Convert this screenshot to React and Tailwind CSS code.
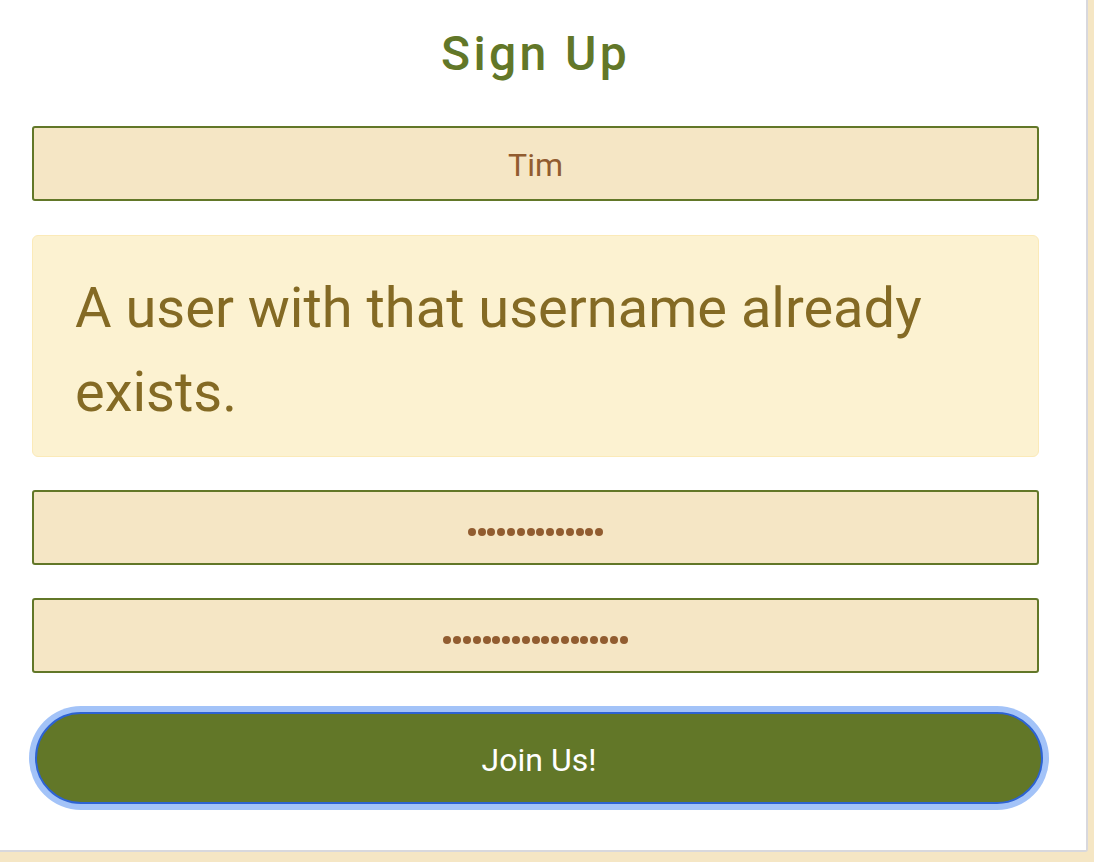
import React from 'react';

const fieldClass =
  "w-full h-[75px] border-2 border-[#627728] rounded-[3px] bg-[#f5e6c5] text-center text-[32px] text-[#915c30] outline-none";

// masked password, drawn as dots so their size matches the page
function PasswordField({ length, className = "" }) {
  return (
    <div className={`${fieldClass} ${className} flex items-center justify-center pt-[9px]`} role="textbox" aria-label="password">
      <div className="flex gap-[1.8px]">
        {Array.from({ length }).map((_, i) => (
          <span key={i} className="w-2 h-2 rounded-full bg-[#915c30]" />
        ))}
      </div>
    </div>
  );
}

export default function App() {
  return (
    <div className="min-h-screen bg-[#f5e6c4] font-['Roboto',sans-serif]">
      <div className="w-[1088px] h-[852px] bg-white border-r-2 border-b-2 border-[#d8d8dd] rounded-br-[3px] flex flex-col pl-8 pr-[47px]">
        <h1 className="text-center text-[48px] font-medium leading-[58px] tracking-[0.07em] text-[#627728] pt-[25px] mb-[43px]">
          Sign Up
        </h1>

        <input className={`${fieldClass} pt-[3px]`} type="text" defaultValue="Tim" readOnly />

        <div className="mt-[34px] border border-[#fbeab8] bg-[#fcf2d1] rounded-[6px] pt-[30px] pb-[22px] pl-[42px] pr-[42px] text-[56px] leading-[84px] text-[#846a24]">
          A user with that username already exists.
        </div>

        <PasswordField length={14} className="mt-[33px]" />
        <PasswordField length={19} className="mt-[33px]" />

        <button
          type="button"
          className="mt-[39px] ml-[3px] w-[1008px] h-[92px] pt-[3px] rounded-full bg-[#627728] border-2 border-[#2d63d2] ring-[6px] ring-[#a3c3f8] text-white text-[32px]"
        >
          Join Us!
        </button>
      </div>
    </div>
  );
}
